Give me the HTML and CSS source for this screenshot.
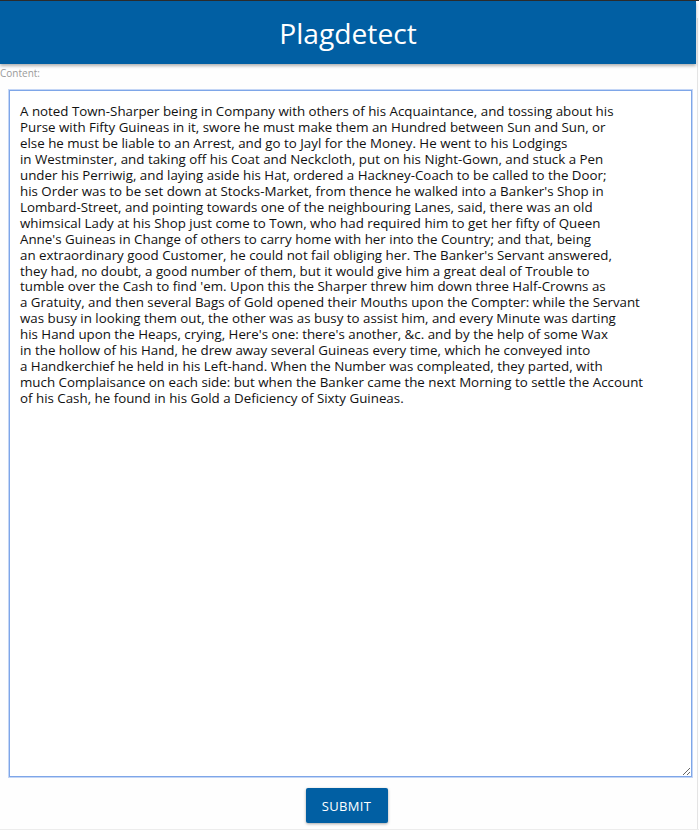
FILE: index.html
```html
<!DOCTYPE html>
<html>
<head>
<meta charset="utf-8">
<link rel="stylesheet" href="styles.css">
</head>
<body>
<div class="shell">
  <div class="page">
    <header class="topbar"><h1 class="title">Plagdetect</h1></header>
    <label class="label" for="content">Content:</label>
    <div class="field">
      <textarea id="content" class="content">A noted Town-Sharper being in Company with others of his Acquaintance, and tossing about his
Purse with Fifty Guineas in it, swore he must make them an Hundred between Sun and Sun, or
else he must be liable to an Arrest, and go to Jayl for the Money. He went to his Lodgings
in Westminster, and taking off his Coat and Neckcloth, put on his Night-Gown, and stuck a Pen
under his Perriwig, and laying aside his Hat, ordered a Hackney-Coach to be called to the Door;
his Order was to be set down at Stocks-Market, from thence he walked into a Banker's Shop in
Lombard-Street, and pointing towards one of the neighbouring Lanes, said, there was an old
whimsical Lady at his Shop just come to Town, who had required him to get her fifty of Queen
Anne's Guineas in Change of others to carry home with her into the Country; and that, being
an extraordinary good Customer, he could not fail obliging her. The Banker's Servant answered,
they had, no doubt, a good number of them, but it would give him a great deal of Trouble to
tumble over the Cash to find 'em. Upon this the Sharper threw him down three Half-Crowns as
a Gratuity, and then several Bags of Gold opened their Mouths upon the Compter: while the Servant
was busy in looking them out, the other was as busy to assist him, and every Minute was darting
his Hand upon the Heaps, crying, Here's one: there's another, &amp;c. and by the help of some Wax
in the hollow of his Hand, he drew away several Guineas every time, which he conveyed into
a Handkerchief he held in his Left-hand. When the Number was compleated, they parted, with
much Complaisance on each side: but when the Banker came the next Morning to settle the Account
of his Cash, he found in his Gold a Deficiency of Sixty Guineas.</textarea>
    </div>
    <div class="actions"><button class="submit" type="button">SUBMIT</button></div>
  </div>
  <div class="rail"></div>
</div>
</body>
</html>
```
FILE: styles.css
```css
html, body {
  margin: 0;
  padding: 0;
  background: #fefefe;
  height: 830px;
  overflow: hidden;
}
body {
  border-top: 1px solid #2b2b2b;
  box-sizing: border-box;
  font-family: "Open Sans", "Noto Sans", sans-serif;
}
.shell {
  display: flex;
  height: 828px;
  border-bottom: 1px solid #ececec;
}
.page {
  width: 696px;
  display: flex;
  flex-direction: column;
}
.rail {
  margin-top: 17px;
  margin-left: 1px;
  border-left: 1px solid #e4e4e4;
  box-sizing: border-box;
  width: 2px;
}
.topbar {
  height: 63px;
  background: #015fa3;
  box-shadow: 0 2px 3px rgba(0,0,0,0.3);
  display: flex;
  align-items: center;
  justify-content: center;
  position: relative;
  z-index: 1;
}
.title {
  margin: 0;
  color: #ffffff;
  font-weight: 400;
  font-size: 28.2px;
  padding-top: 1px;
}
.label {
  font-size: 10px;
  color: #9a9a9a;
  margin-top: 2px;
  line-height: 14px;
  height: 24px;
}
.field {
  padding-left: 9px;
}
.content {
  display: block;
  width: 683px;
  height: 687px;
  box-sizing: border-box;
  margin: 0;
  padding: 13px 10px 10px;
  border: 1px solid #7ea6e8;
  box-shadow: 0 0 0 1px #c4d6f6;
  outline: none;
  font-family: "Open Sans", "Noto Sans", sans-serif;
  font-size: 13.33px;
  line-height: 15.95px;
  color: #111111;
  background: #ffffff;
  white-space: pre;
  overflow: hidden;
  resize: both;
}
.actions {
  display: flex;
  justify-content: center;
  padding-top: 11px;
  padding-right: 3px;
}
.submit {
  width: 82px;
  height: 35px;
  border: none;
  border-radius: 2px;
  background: #015fa3;
  color: #ffffff;
  font-family: "Open Sans", "Noto Sans", sans-serif;
  font-size: 13px;
  letter-spacing: 0.3px;
  box-shadow: 0 1px 3px rgba(0,0,0,0.35);
  cursor: pointer;
}
```
